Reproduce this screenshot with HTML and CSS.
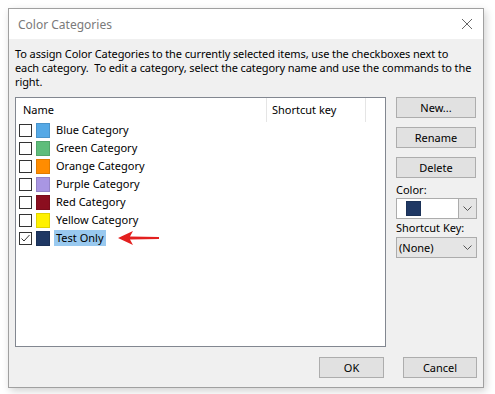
FILE: index.html
```html
<!DOCTYPE html>
<html lang="en">
<head>
  <meta charset="UTF-8" />
  <meta name="viewport" content="width=device-width, initial-scale=1.0" />
  <title>Color Categories</title>
  <link rel="stylesheet" href="styles.css">
</head>
<body>
  <div class="dialog">
    <div class="titlebar">
      <span class="title">Color Categories</span>
      <svg class="close" width="12" height="12" viewBox="0 0 12 12">
        <path d="M1 1 L11 11 M11 1 L1 11" stroke="#666" stroke-width="1" fill="none" />
      </svg>
    </div>
    <div class="content">
      <p class="intro">To assign Color Categories to the currently selected items, use the checkboxes next to<br>each category.&nbsp; To edit a category, select the category name and use the commands to the right.</p>
      <div class="main">
        <div class="listbox">
          <div class="list-head">
            <div class="col-name">Name</div>
            <div class="col-key">Shortcut key</div>
            <div class="col-rest"></div>
          </div>
          <div id="rows"></div>
          <svg class="arrow" width="42" height="14" viewBox="0 0 42 14">
            <path d="M0 7 L15 0 L12 5.5 L41 6 L41 8 L12 8.5 L15 14 Z" fill="#e3201f" />
          </svg>
        </div>
        <div class="side">
          <button class="btn">New...</button>
          <button class="btn">Rename</button>
          <button class="btn">Delete</button>
          <div class="label">Color:</div>
          <div class="combo color-combo">
            <div class="combo-value"><span class="swatch big" style="background:#1f3864"></span></div>
            <div class="combo-drop">
              <svg width="9" height="5" viewBox="0 0 9 5"><path d="M0.5 0.5 L4.5 4.5 L8.5 0.5" stroke="#555" fill="none" /></svg>
            </div>
          </div>
          <div class="label">Shortcut Key:</div>
          <div class="combo key-combo">
            <div class="combo-value">(None)</div>
            <div class="combo-arrow">
              <svg width="9" height="5" viewBox="0 0 9 5"><path d="M0.5 0.5 L4.5 4.5 L8.5 0.5" stroke="#555" fill="none" /></svg>
            </div>
          </div>
        </div>
      </div>
      <div class="footer">
        <button class="btn btn-ok">OK</button>
        <button class="btn btn-cancel">Cancel</button>
      </div>
    </div>
  </div>

  <script>
    const categories = [
      { nama: "Blue Category", warna: "#55a9e6", cek: false },
      { nama: "Green Category", warna: "#5fbd7b", cek: false },
      { nama: "Orange Category", warna: "#ff8c00", cek: false },
      { nama: "Purple Category", warna: "#a996e3", cek: false },
      { nama: "Red Category", warna: "#8b0e1f", cek: false },
      { nama: "Yellow Category", warna: "#fff100", cek: false },
      { nama: "Test Only", warna: "#1f3864", cek: true, pilih: true }
    ];

    const rows = document.getElementById("rows");
    categories.forEach((item) => {
      const row = document.createElement("div");
      row.className = "row";
      row.innerHTML = `
        <span class="check">${item.cek ? '<svg width="11" height="11" viewBox="0 0 11 11"><path d="M1.5 5.5 L4 8 L9.5 2" stroke="#333" fill="none" /></svg>' : ''}</span>
        <span class="swatch" style="background:${item.warna}"></span>
        <span class="name${item.pilih ? ' selected' : ''}">${item.nama}</span>
      `;
      rows.appendChild(row);
    });
  </script>
</body>
</html>
```

FILE: styles.css
```css
body {
  margin: 0;
  padding: 8px;
  background-color: #ffffff;
  font-family: "Noto Sans", "Open Sans", sans-serif;
  font-size: 11px;
  color: #000;
}
.dialog {
  width: 474px;
  height: 378px;
  border: 1px solid #a0a0a0;
  background-color: #f0f0f0;
  box-shadow: 2px 3px 8px rgba(0, 0, 0, 0.18);
  display: flex;
  flex-direction: column;
}
.titlebar {
  height: 30px;
  background-color: #ffffff;
  display: flex;
  align-items: center;
  justify-content: space-between;
  padding: 0 10px 0 9px;
}
.title {
  color: #7a7a7a;
  font-size: 12px;
}
.close {
  margin-top: -1px;
}
.content {
  flex: 1;
  padding: 8px 6px 0 6px;
  display: flex;
  flex-direction: column;
}
.intro {
  margin: 0;
  line-height: 14px;
  height: 50px;
  letter-spacing: -0.1px;
}
.main {
  display: flex;
  gap: 10px;
}
.listbox {
  position: relative;
  width: 369px;
  height: 248px;
  border: 1px solid #828790;
  background-color: #ffffff;
}
.list-head {
  display: flex;
  height: 23px;
}
.list-head > div {
  height: 24px;
  line-height: 23px;
  border-right: 1px solid #e5e5e5;
}
.col-name {
  width: 243px;
  padding-left: 7px;
}
.col-key {
  width: 93px;
  padding-left: 5px;
}
.col-rest {
  border-right: none !important;
}
.row {
  display: flex;
  align-items: center;
  height: 18px;
  padding-left: 3px;
}
.check {
  width: 11px;
  height: 11px;
  border: 1px solid #333;
  display: flex;
  align-items: center;
  justify-content: center;
}
.swatch {
  display: inline-block;
  width: 12px;
  height: 13px;
  border: 1px solid rgba(0, 0, 0, 0.12);
  margin-left: 4px;
}
.swatch.big {
  width: 13px;
  height: 13px;
  margin-left: 0;
}
.name {
  margin-left: 4px;
  padding: 0 2px;
  line-height: 16px;
}
.name.selected {
  background-color: #99c9ef;
}
.arrow {
  position: absolute;
  left: 102px;
  top: 133px;
}
.side {
  width: 81px;
  display: flex;
  flex-direction: column;
}
.btn {
  font-family: inherit;
  font-size: 11px;
  color: #000;
  background-color: #e1e1e1;
  border: 1px solid #adadad;
  height: 21px;
  padding: 0;
  margin: 0;
}
.side .btn {
  width: 80px;
  margin-bottom: 9px;
}
.label {
  margin-top: -5px;
  height: 16px;
  line-height: 16px;
}
.combo {
  display: flex;
  height: 19px;
  border: 1px solid #acacac;
  margin-bottom: 6px;
}
.color-combo {
  background-color: #ffffff;
}
.color-combo .combo-value {
  flex: 1;
  display: flex;
  align-items: center;
  padding-left: 9px;
}
.combo-drop {
  width: 17px;
  border-left: 1px solid #acacac;
  background-color: #e5e5e5;
  display: flex;
  align-items: center;
  justify-content: center;
}
.key-combo {
  background-color: #e5e5e5;
  margin-top: 1px;
}
.key-combo .combo-value {
  flex: 1;
  line-height: 19px;
  padding-left: 2px;
}
.combo-arrow {
  width: 17px;
  display: flex;
  align-items: center;
  justify-content: center;
}
.footer {
  display: flex;
  justify-content: flex-end;
  gap: 19px;
  margin-top: 10px;
  padding-right: 0;
}
.btn-ok {
  width: 65px;
}
.btn-cancel {
  width: 74px;
}
```
